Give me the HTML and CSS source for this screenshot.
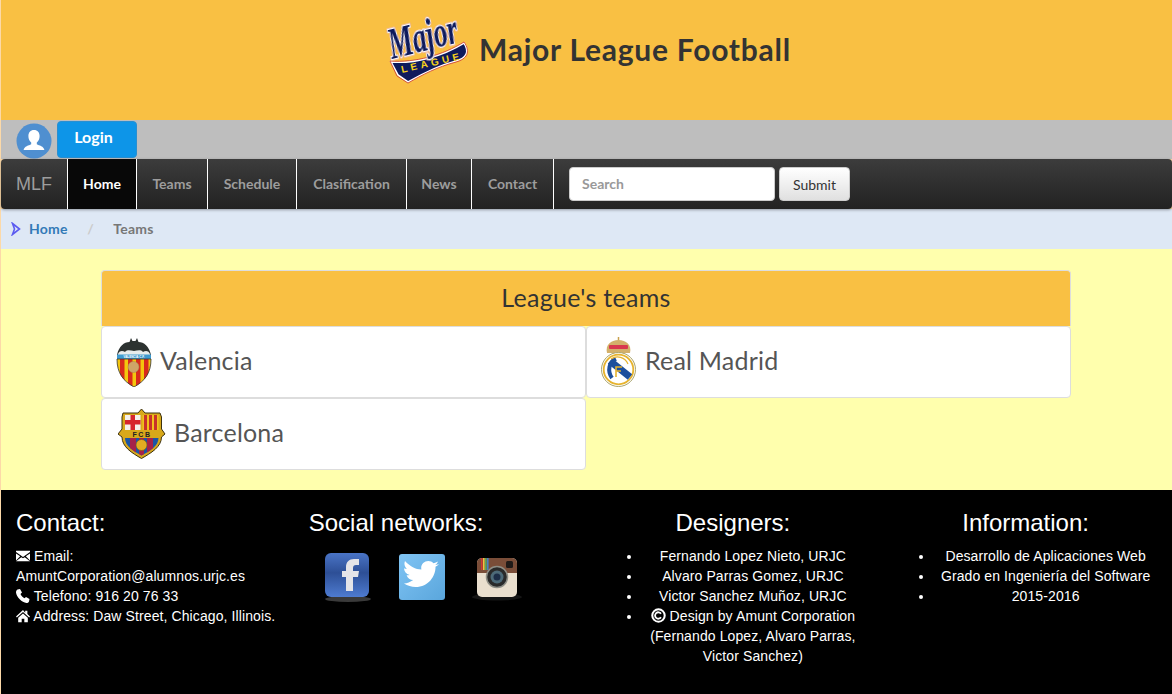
FILE: index.html
```html
<!DOCTYPE html>
<html lang="en">
<head>
<meta charset="utf-8">
<title>Major League Football</title>
<link rel="stylesheet" href="styles.css">
</head>
<body>
<header class="masthead">
  <svg class="logo" viewBox="-6 -16 96 102" aria-hidden="true">
    <path d="M6 46 C30 48 58 40 79 27 C85 36 81 42 71 45 C52 50 37 58 23 66 L13 59 Z" fill="#0e1a5c" stroke="#fff" stroke-width="1.600"/>
    <path d="M5 45 C30 47 58 39 79 26 C86 36 82 43 71 46 C52 51 37 59 23 67 L12 60 Z" fill="none" stroke="#c8332f" stroke-width=".8"/>
    <text class="logo-league" transform="translate(17 57) rotate(-13)">LEAGUE</text>
    <text class="logo-major" transform="translate(7 43) rotate(-14) scale(.92 1.45)">Major</text>
  </svg>
  <h1 class="site-title">Major League Football</h1>
</header>

<div class="userbar">
  <svg class="avatar" viewBox="0 0 36 36" aria-hidden="true">
    <circle cx="18" cy="18" r="17.500" fill="#4f8fd0"/>
    <path d="M18 7c-3.600 0-5.600 2.600-5.600 6 0 2.600 1 5 2.800 6.400v1.800c-2.400 1.200-7 2-7.600 5.800h20.800c-.6-3.800-5.200-4.600-7.600-5.800v-1.800c1.800-1.400 2.800-3.800 2.800-6.400 0-3.400-2-6-5.600-6z" fill="#fff"/>
  </svg>
  <a class="login" href="#">Login</a>
</div>

<nav class="navbar">
  <a class="brand" href="#">MLF</a>
  <ul class="navlist">
    <li class="nav-home active"><a href="#">Home</a></li>
    <li class="nav-teams"><a href="#">Teams</a></li>
    <li class="nav-schedule"><a href="#">Schedule</a></li>
    <li class="nav-class"><a href="#">Clasification</a></li>
    <li class="nav-news"><a href="#">News</a></li>
    <li class="nav-contact"><a href="#">Contact</a></li>
  </ul>
  <form class="searchform">
    <input class="searchinput" type="text" placeholder="Search">
    <button class="submit" type="button">Submit</button>
  </form>
</nav>

<div class="crumbs">
  <svg class="crumb-arrow" viewBox="0 0 10 14" aria-hidden="true"><path d="M1.500 1.500 L8.500 7 L1.500 12.500 L3.500 7 Z" fill="none" stroke="#5b5bf0" stroke-width="1.600"/></svg>
  <a class="crumb-link" href="#">Home</a>
  <span class="crumb-sep">/</span>
  <span class="crumb-current">Teams</span>
</div>

<main class="content">
  <section class="panel">
    <h2 class="panel-title">League's teams</h2>
    <div class="team-grid">
      <a class="team" href="#">
        <svg class="crest crest-val" viewBox="0 0 36 50" aria-hidden="true">
          <path d="M15 1l1.500 3h3L21 1l1.500 4C28 5 33 9 35 18H1C3 9 8 5 13.500 5z" fill="#2c3230"/>
          <path d="M2 17c2-4 5-3 7-2 3-3 6-1 9-1s6-2 9 1c2-1 5-2 7 2v2H2z" fill="#e8ecec"/>
          <rect x="1" y="17.500" width="34" height="5" fill="#3f9bd0"/>
          <text class="val-text" x="18" y="21.400" text-anchor="middle">VALENCIA C.F.</text>
          <clipPath id="valclip"><path d="M1 22h34c0 14-6 22-17 28C7 44 1 36 1 22z"/></clipPath>
          <g clip-path="url(#valclip)">
            <rect x="0" y="22" width="36" height="28" fill="#f3c60d"/>
            <rect x="4" y="22" width="4.500" height="28" fill="#d92a1c"/>
            <rect x="12" y="22" width="4.500" height="28" fill="#d92a1c"/>
            <rect x="20" y="22" width="4.500" height="28" fill="#d92a1c"/>
            <rect x="28" y="22" width="4.500" height="28" fill="#d92a1c"/>
          </g>
          <path d="M1 22h34c0 14-6 22-17 28C7 44 1 36 1 22z" fill="none" stroke="#333" stroke-width=".8"/>
          <circle cx="17.500" cy="30" r="5.500" fill="#cfa468" stroke="#a88650" stroke-width=".5"/>
        </svg>
        <span class="team-name">Valencia</span>
      </a>
      <a class="team" href="#">
        <svg class="crest crest-rm" viewBox="0 0 36 50" aria-hidden="true">
          <path d="M17.500 0v3" stroke="#c9a24e" stroke-width="1.500"/>
          <path d="M6 16C4 8 10 3 17.500 3S31 8 29 16z" fill="#d3b06a"/>
          <rect x="8" y="8" width="19" height="4" rx="1" fill="#d8384e"/>
          <circle cx="17.500" cy="32.500" r="17" fill="#fff" stroke="#a9a36a" stroke-width="1"/>
          <circle cx="17.500" cy="32.500" r="14.800" fill="none" stroke="#e6b32e" stroke-width="1.800"/>
          <path d="M9 24 L29 40" stroke="#1d4f9c" stroke-width="7"/>
          <path d="M15 22 C8 25 6 34 11 41" fill="none" stroke="#1d4f9c" stroke-width="4"/>
          <path d="M10 22 C16 18 24 20 27 27" fill="none" stroke="#e6b32e" stroke-width="1.200"/>
          <path d="M21 30h-6v10M15 34h5" stroke="#e6b32e" stroke-width="1.600" fill="none"/>
        </svg>
        <span class="team-name">Real Madrid</span>
      </a>
      <a class="team" href="#">
        <svg class="crest crest-fcb" viewBox="0 0 48 50" aria-hidden="true">
          <path d="M23.500 0L27 4H42L43.500 8V20L47 25L43.500 28C43.500 38 33 44 23.500 49.500 14 44 4 38 4 28L0 25L4 20V8L5 4H20Z" fill="#d8a81a" stroke="#3d3210" stroke-width="1"/>
          <rect x="7" y="6" width="15.500" height="15" fill="#f4f0ec"/>
          <rect x="12.500" y="6" width="4.500" height="15" fill="#d6252e"/>
          <rect x="7" y="11" width="15.500" height="4.500" fill="#d6252e"/>
          <rect x="24.500" y="6" width="16" height="15" fill="#f2c21c"/>
          <rect x="26" y="6" width="3" height="15" fill="#c8322a"/>
          <rect x="31" y="6" width="3" height="15" fill="#c8322a"/>
          <rect x="36" y="6" width="3" height="15" fill="#c8322a"/>
          <text class="fcb-text" x="24" y="27.500" text-anchor="middle">FCB</text>
          <clipPath id="fcbclip"><path d="M7 29H40.500C40.500 37 32 42 23.500 46.500 15 42 7 37 7 29z"/></clipPath>
          <g clip-path="url(#fcbclip)">
            <rect x="0" y="29" width="48" height="20" fill="#1b55a5"/>
            <rect x="12" y="29" width="6" height="20" fill="#a5224a"/>
            <rect x="29" y="29" width="6" height="20" fill="#a5224a"/>
            <rect x="21" y="29" width="5" height="20" fill="#a5224a"/>
          </g>
          <circle cx="23.500" cy="36" r="5.500" fill="#e2ad22" stroke="#7a5c10" stroke-width=".6"/>
        </svg>
        <span class="team-name">Barcelona</span>
      </a>
    </div>
  </section>
</main>

<footer class="footer">
  <div class="fcol">
    <h3 class="fhead">Contact:</h3>
    <p class="fline"><svg class="gi" viewBox="0 0 16 14" aria-hidden="true"><path d="M0 1h16v1.500L8 8 0 2.500zM0 4l4.800 3.200L0 12zM16 4l-4.800 3.200L16 12zM0 13l6-4.700L8 9.500l2-1.200L16 13z" fill="#fff"/></svg> Email:<br>AmuntCorporation@alumnos.urjc.es<br><svg class="gi" viewBox="0 0 14 14" aria-hidden="true"><path d="M1.500 0.500L4 0l2 3.500-1.500 1.500c.5 1.500 2.500 3.700 4 4.300L10 8l3.500 2-.5 2.500c-.5 1-1.500 1.500-2.500 1.500C6 13.500.5 8 0 3.500 0 2 .5 1 1.500.5z" fill="#fff"/></svg> Telefono: 916 20 76 33<br><svg class="gi" viewBox="0 0 16 14" aria-hidden="true"><path d="M8 0L0 7.500 1 8.700 8 2.500l7 6.200 1-1.200-3-2.800V1h-2.500v2.200zM2.500 9V14H6.500V10h3v4h4V9L8 4z" fill="#fff"/></svg> Address: Daw Street, Chicago, Illinois.</p>
  </div>
  <div class="fcol">
    <h3 class="fhead">Social networks:</h3>
    <div class="socials">
      <svg class="soc soc-fb" viewBox="0 0 50 50" aria-hidden="true">
        <defs><linearGradient id="fbg" x1="0" y1="0" x2="0" y2="1"><stop offset="0" stop-color="#4a74c6"/><stop offset=".45" stop-color="#2d4f96"/><stop offset="1" stop-color="#4e7bd0"/></linearGradient></defs>
        <ellipse cx="24" cy="46" rx="23" ry="3" fill="#3a3a3a"/>
        <rect x="1" y="0" width="44" height="44" rx="6" fill="url(#fbg)"/>
        <path d="M22 38V24h-4v-6h4v-4c0-5 3-8 8-8h5v6h-3c-2 0-3 1-3 3v3h6l-1 6h-5v14z" fill="#e4e4e8"/>
      </svg>
      <svg class="soc soc-tw" viewBox="0 0 46 46" aria-hidden="true">
        <defs><linearGradient id="twg" x1="0" y1="0" x2="1" y2="1"><stop offset="0" stop-color="#80c4f4"/><stop offset="1" stop-color="#5aa6dc"/></linearGradient></defs>
        <rect x="0" y="0" width="46" height="46" rx="3" fill="url(#twg)"/>
        <path d="M40 10c-1.400.7-2.800 1-4 1.100 1.500-.8 2.500-2.100 3-3.600-1.400.8-2.900 1.400-4.500 1.700-1.300-1.400-3.200-2.200-5.200-2.200-3.900 0-7.100 3.100-7.100 7 0 .5.100 1.100.2 1.600C16.500 15.300 11 12.500 6 7c-1.200 2.500-.5 5.500 1.800 8-1-.1-2-.4-2.800-.8.1 3.300 2.200 5.900 5.600 6.900-1 .3-2 .3-3 .1 1 2.800 3.500 4.800 6.600 4.900C11.500 28 8 29.500 5 29.500c3.500 2.300 7.500 3.500 11.500 3.500 13 0 20.300-11 20-20.300C38 11.800 39.200 11 40 10z" fill="#fff"/>
      </svg>
      <svg class="soc soc-ig" viewBox="0 0 50 44" aria-hidden="true">
        <ellipse cx="25" cy="40" rx="25" ry="3.500" fill="#151515"/>
        <rect x="5" y="1" width="40" height="39" rx="5" fill="#eadfce"/>
        <path d="M5 16V6a5 5 0 0 1 5-5h30a5 5 0 0 1 5 5v10H33a11 11 0 0 0-16 0z" fill="#7a4d38"/>
        <rect x="9" y="1" width="1.600" height="12" fill="#d03a30"/>
        <rect x="11" y="1" width="1.600" height="12" fill="#e8c640"/>
        <rect x="13" y="1" width="1.600" height="12" fill="#58a860"/>
        <rect x="15" y="1" width="1.600" height="12" fill="#4a80c0"/>
        <rect x="34" y="4" width="7" height="7" rx="1.500" fill="#1f1a18"/>
        <circle cx="25" cy="20" r="10.500" fill="#2a2a2a" stroke="#8e8e86" stroke-width="1.500"/>
        <circle cx="25" cy="20" r="6.500" fill="#4d6a78"/>
        <circle cx="25" cy="20" r="3.500" fill="#1d2e48"/>
      </svg>
    </div>
  </div>
  <div class="fcol fcol-center">
    <h3 class="fhead">Designers:</h3>
    <ul class="flist">
      <li>Fernando Lopez Nieto, URJC</li>
      <li>Alvaro Parras Gomez, URJC</li>
      <li>Victor Sanchez Muñoz, URJC</li>
      <li><svg class="gi gi-c" viewBox="0 0 14 14" aria-hidden="true"><circle cx="7" cy="7" r="5.800" fill="none" stroke="#fff" stroke-width="1.900"/><path d="M9.300 5.300a3 3 0 1 0 0 3.400" fill="none" stroke="#fff" stroke-width="1.700"/></svg> Design by Amunt Corporation (Fernando Lopez, Alvaro Parras, Victor Sanchez)</li>
    </ul>
  </div>
  <div class="fcol fcol-center">
    <h3 class="fhead">Information:</h3>
    <ul class="flist">
      <li>Desarrollo de Aplicaciones Web</li>
      <li>Grado en Ingeniería del Software</li>
      <li>2015-2016</li>
    </ul>
  </div>
</footer>
</body>
</html>
```

FILE: styles.css
```css
* { box-sizing: border-box; }
html, body { height: 100%; }
body {
  margin: 0;
  padding-left: 1px;
  background: #fcd9a8;
  font-family: "Liberation Sans", Arial, sans-serif;
  font-size: 14px;
  line-height: 20px;
  color: #333;
  overflow: hidden;
}
a { text-decoration: none; }

.masthead {
  height: 120px;
  background: #f9c043;
  display: flex;
  justify-content: center;
  align-items: flex-start;
  padding-right: 3px;
}
.logo { width: 96px; height: 102px; margin-right: 4px; }
.logo-major {
  font: italic bold 30px "Liberation Serif", serif;
  fill: #0e1a5c;
  stroke: #fff;
  stroke-width: 2px;
  paint-order: stroke;
  filter: drop-shadow(0 0 .5px #c8332f);
}
.logo-league { font: bold 10px "Liberation Sans", sans-serif; letter-spacing: 3.5px; fill: #f6d21c; }
.site-title {
  margin: 31px 0 0;
  font-family: Lato, sans-serif;
  font-size: 30px;
  line-height: 36px;
  font-weight: 700;
  letter-spacing: .75px;
  color: #333;
}

.userbar {
  height: 39px;
  background: #bebebe;
  display: flex;
  align-items: flex-start;
  padding: 1px 0 0 15px;
}
.avatar { width: 36px; height: 36px; margin-top: 2px; }
.login {
  width: 80px;
  height: 37px;
  margin-left: 5px;
  background: #0d95e8;
  border: 1px solid #2a8fd0;
  border-radius: 4px;
  color: #fff;
  font-family: Lato, sans-serif;
  font-weight: 700;
  font-size: 16px;
  line-height: 30px;
  text-align: center;
  padding-right: 7px;
}

.navbar {
  height: 50px;
  display: flex;
  align-items: stretch;
  border-radius: 4px;
  background: linear-gradient(#3c3c3c, #222);
  box-shadow: 0 1px 3px rgba(0,0,0,.35);
  position: relative;
  font-family: Lato, sans-serif;
}
.brand {
  width: 67px;
  padding-left: 15px;
  font-family: "Liberation Sans", sans-serif;
  font-size: 18px;
  line-height: 50px;
  color: #9d9d9d;
  border-right: 1px solid #fff;
}
.navlist { display: flex; margin: 0; padding: 0; list-style: none; }
.navlist li { border-right: 1px solid #fff; }
.navlist a {
  display: block;
  text-align: center;
  font-size: 14px;
  font-weight: 700;
  line-height: 50px;
  color: #9d9d9d;
}
.nav-home { width: 69px; }
.nav-teams { width: 71px; }
.nav-schedule { width: 89px; }
.nav-class { width: 110px; }
.nav-news { width: 65px; }
.nav-contact { width: 82px; }
.navlist .active { background: #080808; }
.navlist .active a { color: #fff; }
.searchform { display: flex; align-items: center; gap: 4px; margin-left: 15px; }
.searchinput {
  width: 206px;
  height: 34px;
  padding: 4px 12px 6px;
  border: 1px solid #ccc;
  border-radius: 4px;
  font-family: Lato, sans-serif;
  font-size: 14px;
  font-weight: 700;
  background: #fff;
}
.searchinput::placeholder { color: #999; }
.submit {
  width: 71px;
  height: 34px;
  padding: 0;
  border: 1px solid #ccc;
  border-radius: 4px;
  background: linear-gradient(#fff, #e0e0e0);
  font-family: Lato, sans-serif;
  font-size: 14px;
  color: #333;
}

.crumbs {
  height: 40px;
  background: #dee8f5;
  display: flex;
  align-items: center;
  padding-left: 10px;
  font-family: Lato, sans-serif;
  font-size: 14px;
  font-weight: 700;
  letter-spacing: .2px;
}
.crumb-arrow { width: 10px; height: 14px; margin-right: 8px; }
.crumb-link { color: #337ab7; }
.crumb-sep { margin: 0 19.5px; color: #ccc; }
.crumb-current { color: #777; }

.content {
  height: 241px;
  background: #ffffad;
  padding: 21px 100px 0;
}
.panel { width: 970px; }
.panel-title {
  margin: 0;
  height: 56px;
  background: #f9c043;
  border: 1px solid #ddd;
  border-bottom: 0;
  border-radius: 4px 4px 0 0;
  font-family: Lato, sans-serif;
  font-size: 25px;
  font-weight: 400;
  line-height: 53px;
  text-align: center;
  letter-spacing: .3px;
  color: #333;
}
.team-grid { display: grid; grid-template-columns: 485px 485px; grid-auto-rows: 72px; }
.team {
  display: flex;
  align-items: center;
  padding-left: 14px;
  background: #fff;
  border: 1px solid #ddd;
  border-radius: 4px;
  color: #555;
}
.crest { display: block; flex: none; }
.crest-val, .crest-rm { width: 36px; height: 50px; margin-right: 8px; }
.crest-fcb { width: 48px; height: 50px; margin: 0 8px 0 2px; }
.team-name { font-family: Lato, sans-serif; font-size: 25px; line-height: 30px; letter-spacing: .2px; margin-top: -5px; }
.fcb-text { font: bold 7px "Liberation Sans", sans-serif; letter-spacing: 1.500px; fill: #222; }
.val-text { font: bold 3px "Liberation Sans", sans-serif; fill: #fff; }

.footer {
  height: 204px;
  background: #000;
  display: grid;
  grid-template-columns: repeat(4, 1fr);
  color: #fff;
}
.fcol { padding: 0 15px; letter-spacing: .1px; }
.fcol-center { text-align: center; }
.fhead { margin: 20px 0 10px; font-size: 24px; font-weight: 400; line-height: 26.4px; letter-spacing: 0; }
.fline { margin: 0; }
.gi { width: 14px; height: 14px; vertical-align: -2px; }
.gi-c { width: 15px; height: 15px; }
.socials { display: flex; align-items: flex-start; margin-top: 17px; }
.soc { display: block; flex: none; }
.soc-fb { width: 50px; height: 50px; margin-left: 15px; }
.soc-tw { width: 46px; height: 46px; margin-left: 25px; margin-top: 1px; }
.soc-ig { width: 50px; height: 44px; margin-left: 27px; margin-top: 4px; }
.flist { margin: 0 0 10px; padding-left: 40px; }
```
